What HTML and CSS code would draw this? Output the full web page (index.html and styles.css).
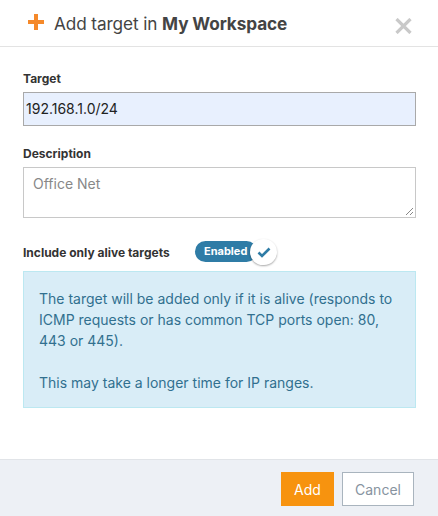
FILE: index.html
```html
<!DOCTYPE html>
<html>
<head>
<meta charset="utf-8">
<link rel="stylesheet" href="styles.css">
</head>
<body>
<div class="modal">
  <div class="header">
    <svg class="plus" width="20" height="16" viewBox="0 0 20 16"><path d="M10 0v16M2 8h16" stroke="#f5892a" stroke-width="4"/></svg>
    <h1 class="title">Add target in <b>My Workspace</b></h1>
    <svg class="close" width="17" height="16" viewBox="0 0 17 16"><path d="M1.5 1l14 14M15.5 1l-14 14" stroke="#c9c9c9" stroke-width="3.2"/></svg>
  </div>
  <div class="body">
    <label class="label">Target</label>
    <div class="input">192.168.1.0/24</div>
    <label class="label">Description</label>
    <div class="textarea"><span class="ph">Office Net</span>
      <svg class="grip" width="7" height="7" viewBox="0 0 7 7"><path d="M7 0L0 7M7 4L4 7" stroke="#888" stroke-width="1"/></svg>
    </div>
    <div class="alive-row">
      <span class="label-inline">Include only alive targets</span>
      <div class="toggle">
        <span class="toggle-text">Enabled</span>
        <span class="knob"><svg width="14" height="11" viewBox="0 0 14 11"><path d="M1.5 5.5l3.5 3.5 7.5-7.5" fill="none" stroke="#2f7ca6" stroke-width="2.6"/></svg></span>
      </div>
    </div>
    <div class="info">
      <p>The target will be added only if it is alive (responds to ICMP requests or has common TCP ports open: 80, 443 or 445).</p>
      <p>This may take a longer time for IP ranges.</p>
    </div>
  </div>
  <div class="footer">
    <button class="btn btn-add">Add</button>
    <button class="btn btn-cancel">Cancel</button>
  </div>
</div>
</body>
</html>
```
FILE: styles.css
```css
* { box-sizing: border-box; }
html, body { margin: 0; padding: 0; background: #fff; }
body { font-family: Inter, "Noto Sans", sans-serif; color: #333; width: 438px; height: 516px; overflow: hidden; }
.modal { display: flex; flex-direction: column; height: 516px; }
.header { height: 47px; border-bottom: 1px solid #e3e3e3; display: flex; align-items: center; padding: 0 26px 0 26px; }
.plus { flex: none; margin-top: -2px; }
.title { margin: 0 0 0 8px; font-size: 17.2px; font-weight: 400; color: #444; flex: 1; letter-spacing: -0.1px; }
.title b { font-weight: 700; }
.close { flex: none; margin-top: 5px; }
.body { padding: 24px 22px 0 23px; flex: 1; }
.label { display: block; font-size: 12px; font-weight: 700; color: #333; line-height: 15px; margin-bottom: 6px; }
.input { height: 34px; border: 1px solid #a9a9a9; background: #e8f0fe; font-size: 14px; color: #222; padding: 0 2px; line-height: 32px; margin-bottom: 20px; }
.textarea { position: relative; height: 51px; border: 1px solid #c8c8c8; padding: 7px 9px; font-size: 14px; line-height: 18px; }
.ph { color: #888; }
.grip { position: absolute; right: 2px; bottom: 2px; }
.alive-row { display: flex; align-items: center; margin-top: 23px; height: 22px; }
.label-inline { font-size: 12px; font-weight: 700; color: #333; width: 172px; }
.toggle { position: relative; width: 83px; height: 22px; }
.toggle-text { display: block; width: 62px; height: 21px; background: #2f7ca6; border-radius: 11px; color: #fff; font-size: 11px; font-weight: 700; line-height: 21px; padding-left: 9px; }
.knob { position: absolute; left: 55px; top: -2px; width: 27px; height: 26px; border-radius: 13px; background: #fff; box-shadow: 0 1px 2px rgba(0,0,0,0.35); display: flex; align-items: center; justify-content: center; }
.info { margin-top: 8px; background: #d9edf7; border: 1px solid #bce8f1; color: #31708f; font-size: 14px; line-height: 21px; padding: 16px 15px 14px 15px; }
.info p { margin: 0 0 21px; }
.info p:last-child { margin-bottom: 0; }
.footer { height: 57px; border-top: 1px solid #e1e4e8; background: #edf0f5; display: flex; justify-content: flex-end; align-items: flex-start; padding: 12px 24px 0 0; gap: 8px; }
.btn { font-family: Inter, "Noto Sans", sans-serif; font-size: 14px; height: 34px; padding: 0; cursor: pointer; }
.btn-add { width: 53px; background: #f7930f; border: none; color: #fff; }
.btn-cancel { width: 72px; background: #fff; border: 1px solid #a9b4be; color: #8793a0; }
```
